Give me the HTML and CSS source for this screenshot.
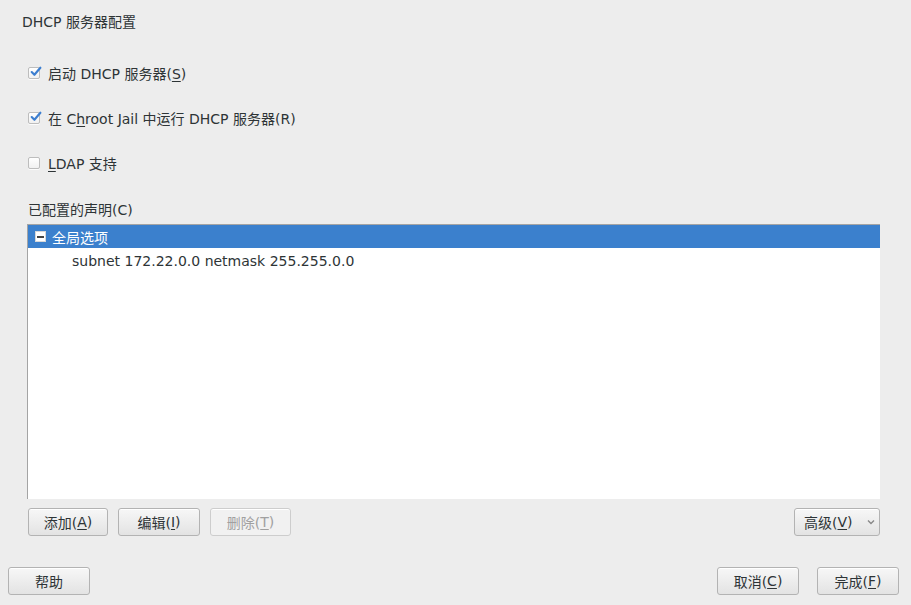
FILE: index.html
```html
<!DOCTYPE html>
<html>
<head>
<meta charset="utf-8">
<link rel="stylesheet" href="styles.css">
</head>
<body>
<div class="page">
  <div class="title">DHCP 服务器配置</div>
  <div class="checks">
    <div class="check">
      <span class="box checked"><svg viewBox="0 0 12 12" width="13" height="13"><path d="M2.5 6.5 L5 9 L10.5 2.5" fill="none" stroke="#3d7fd0" stroke-width="2" stroke-linecap="round" stroke-linejoin="round"/></svg></span>
      <span class="lbl">启动 DHCP 服务器(<u>S</u>)</span>
    </div>
    <div class="check">
      <span class="box checked"><svg viewBox="0 0 12 12" width="13" height="13"><path d="M2.5 6.5 L5 9 L10.5 2.5" fill="none" stroke="#3d7fd0" stroke-width="2" stroke-linecap="round" stroke-linejoin="round"/></svg></span>
      <span class="lbl">在 C<u>h</u>root Jail 中运行 DHCP 服务器(R)</span>
    </div>
    <div class="check">
      <span class="box"></span>
      <span class="lbl"><u>L</u>DAP 支持</span>
    </div>
  </div>
  <div class="section-label">已配置的声明(C)</div>
  <div class="tree">
    <div class="row selected"><span class="expander"><span class="minus"></span></span><span>全局选项</span></div>
    <div class="row child">subnet 172.22.0.0 netmask 255.255.0.0</div>
  </div>
  <div class="actions">
    <div class="left-actions">
      <button class="btn w80">添加(<u>A</u>)</button>
      <button class="btn w82">编辑(<u>I</u>)</button>
      <button class="btn w81 disabled">删除(<u>T</u>)</button>
    </div>
    <button class="btn combo">高级(<u>V</u>)<span class="chev"><svg viewBox="0 0 8 6" width="8" height="6"><path d="M1 1.5 L4 4.5 L7 1.5" fill="none" stroke="#888" stroke-width="1.4"/></svg></span></button>
  </div>
  <div class="footer">
    <button class="btn w82">帮助</button>
    <div class="right-footer">
      <button class="btn w82">取消(<u>C</u>)</button>
      <button class="btn w82">完成(<u>F</u>)</button>
    </div>
  </div>
</div>
</body>
</html>
```

FILE: styles.css
```css
html, body {
  margin: 0;
  padding: 0;
  background: #ededed;
}
body {
  font-family: "DejaVu Sans", "Noto Sans CJK SC", sans-serif;
  font-size: 14px;
  color: #2e3436;
  width: 911px;
  height: 605px;
  overflow: hidden;
}
u { text-decoration: underline; text-underline-offset: 2px; text-decoration-thickness: 1px; }
.page {
  display: flex;
  flex-direction: column;
}
.title {
  margin: 12px 0 0 22px;
  height: 20px;
  line-height: 20px;
}
.checks {
  display: flex;
  flex-direction: column;
  gap: 25px;
  margin: 31px 0 0 28px;
}
.check {
  display: flex;
  align-items: center;
  height: 20px;
  gap: 8px;
}
.box {
  width: 10px;
  height: 10px;
  border: 1px solid #bdbdbd;
  border-radius: 2px;
  background: linear-gradient(#ffffff, #f1f1f1);
  box-shadow: 0 1px 0 rgba(255,255,255,0.8);
  position: relative;
  flex: none;
}
.box svg {
  position: absolute;
  left: 0;
  top: -3px;
}
.section-label {
  margin: 27px 0 0 28px;
  height: 20px;
  line-height: 20px;
}
.tree {
  margin: 4px 0 0 27px;
  width: 853px;
  height: 275px;
  background: #fff;
  border-top: 1px solid #a4a4a4;
  border-left: 1px solid #a4a4a4;
  box-sizing: border-box;
}
.row {
  display: flex;
  align-items: center;
}
.row.selected {
  height: 23px;
  background: #3b80cd;
  color: #fff;
  padding-left: 7px;
  gap: 6px;
}
.expander {
  width: 9px;
  height: 9px;
  background: #fff;
  border: 1px solid #d8d8d8;
  display: flex;
  align-items: center;
  justify-content: center;
}
.minus {
  width: 7px;
  height: 2px;
  background: #444;
}
.row.child {
  height: 25px;
  padding-left: 44px;
  color: #2e3436;
}
.actions {
  display: flex;
  justify-content: space-between;
  margin: 9px 31px 0 28px;
}
.left-actions {
  display: flex;
  gap: 10px;
}
.btn {
  font-family: "DejaVu Sans", "Noto Sans CJK SC", sans-serif;
  font-size: 14px;
  color: #2e3436;
  height: 28px;
  border: 1px solid #b3b3b3;
  border-radius: 3px;
  background: linear-gradient(#f7f7f7, #e3e3e3);
  box-shadow: inset 0 1px 0 #fff;
  padding: 0;
  display: flex;
  align-items: center;
  justify-content: center;
}
.w80 { width: 80px; }
.w81 { width: 81px; }
.w82 { width: 82px; }
.btn.disabled {
  color: #a0a0a0;
  border-color: #cdcdcd;
  background: #f1f1f1;
}
.combo {
  width: 86px;
  justify-content: flex-start;
  padding-left: 9px;
}
.chev {
  margin-left: 14px;
  display: flex;
  align-items: center;
}
.footer {
  display: flex;
  justify-content: space-between;
  margin: 31px 12px 0 8px;
}
.right-footer {
  display: flex;
  gap: 18px;
}
```
